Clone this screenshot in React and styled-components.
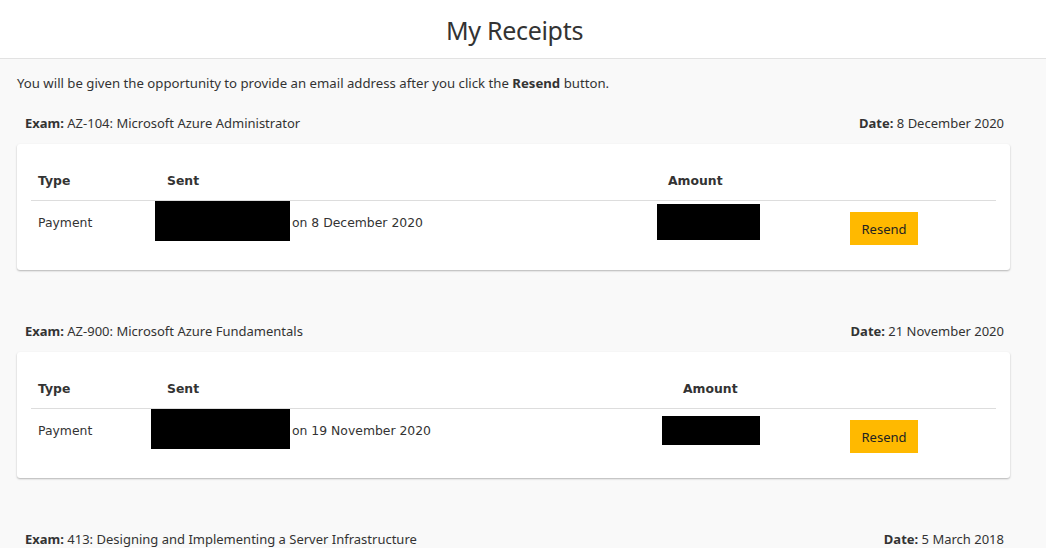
import React from 'react'
import styled, { createGlobalStyle } from 'styled-components'

const GlobalStyle = createGlobalStyle`
  html, body {
    margin: 0;
    padding: 0;
    background: #f9f9f9;
    color: #333;
    font-family: "Noto Sans", "Open Sans", sans-serif;
  }
`

const receipts = [
  {
    exam: 'AZ-104: Microsoft Azure Administrator',
    date: '8 December 2020',
    sent: 'on 8 December 2020',
    cols: [129, 501, 182, 153],
    mailBox: { width: 135, height: 40, shift: -12, top: -12 },
    amountBox: { width: 103, height: 36, shift: -11, top: -9 },
  },
  {
    exam: 'AZ-900: Microsoft Azure Fundamentals',
    date: '21 November 2020',
    sent: 'on 19 November 2020',
    cols: [129, 516, 167, 153],
    mailBox: { width: 139, height: 40, shift: -16, top: -12 },
    amountBox: { width: 98, height: 29, shift: -21, top: -5 },
  },
  {
    exam: '413: Designing and Implementing a Server Infrastructure',
    date: '5 March 2018',
    sent: 'on 5 March 2018',
    cols: [129, 501, 182, 153],
    mailBox: { width: 135, height: 40, shift: -12, top: -12 },
    amountBox: { width: 103, height: 36, shift: -11, top: -9 },
  },
]

function App() {
  return (
    <>
      <GlobalStyle />
      <Header>
        <Title>My Receipts</Title>
      </Header>
      <Main>
        <Info>
          You will be given the opportunity to provide an email address after you click the <b>Resend</b> button.
        </Info>
        {receipts.map((r) => (
          <Section key={r.exam}>
            <ExamRow>
              <span><b>Exam:</b> {r.exam}</span>
              <span><b>Date:</b> {r.date}</span>
            </ExamRow>
            <Card>
              <Table>
                <colgroup>
                  {r.cols.map((w, i) => <col key={i} style={{ width: w }} />)}
                </colgroup>
                <thead>
                  <tr>
                    <Th>Type</Th>
                    <Th>Sent</Th>
                    <Th>Amount</Th>
                    <Th />
                  </tr>
                </thead>
                <tbody>
                  <tr>
                    <Td>Payment</Td>
                    <Td>
                      <Redacted style={{ width: r.mailBox.width, height: r.mailBox.height, marginLeft: r.mailBox.shift, marginTop: r.mailBox.top }} />
                      <SentText>{r.sent}</SentText>
                    </Td>
                    <Td>
                      <Redacted style={{ width: r.amountBox.width, height: r.amountBox.height, marginLeft: r.amountBox.shift, marginTop: r.amountBox.top }} />
                    </Td>
                    <Td>
                      <ResendButton>Resend</ResendButton>
                    </Td>
                  </tr>
                </tbody>
              </Table>
            </Card>
          </Section>
        ))}
      </Main>
    </>
  )
}

export default App

const Header = styled.header`
  background: #fff;
  border-bottom: 1px solid #e2e2e2;
  height: 58px;
  padding-right: 17px;
  display: flex;
  align-items: center;
  justify-content: center;
`

const Title = styled.h1`
  margin: 2px 0 0;
  font-weight: 400;
  font-size: 25px;
  color: #333;
  font-family: "Noto Sans", sans-serif;
  letter-spacing: -0.3px;
`

const Main = styled.main`
  padding: 14px 36px 0 17px;
`

const Info = styled.p`
  margin: 0 0 20px;
  font-size: 13.2px;
  line-height: 20px;
`

const Section = styled.section`
  margin-bottom: 51px;
`

const ExamRow = styled.div`
  display: flex;
  justify-content: space-between;
  padding: 0 6px 0 8px;
  font-size: 13px;
  line-height: 20px;
  margin-bottom: 11px;
`

const Card = styled.div`
  background: #fff;
  border-radius: 3px;
  box-shadow: 0 1px 2px rgba(0, 0, 0, 0.28);
  padding: 14px;
`

const Table = styled.table`
  width: 100%;
  border-collapse: collapse;
  table-layout: fixed;
  font-family: "DejaVu Sans", Verdana, sans-serif;
  font-size: 12.4px;
  color: #333;
`

const Th = styled.th`
  text-align: left;
  font-weight: 700;
  padding: 13px 7px 9px;
  line-height: 20px;
  border-bottom: 1px solid #ddd;
`

const Td = styled.td`
  padding: 12px 7px 11px;
  line-height: 20px;
  vertical-align: top;
  white-space: nowrap;
`

const Redacted = styled.span`
  display: inline-block;
  background: #000;
  vertical-align: top;
`

const SentText = styled.span`
  margin-left: 2px;
`

const ResendButton = styled.button`
  background: #ffb900;
  border: none;
  border-radius: 0;
  width: 68px;
  height: 33px;
  margin-top: -1px;
  color: #222;
  font-family: "Noto Sans", sans-serif;
  font-size: 13px;
  padding: 0;
  cursor: pointer;
`
